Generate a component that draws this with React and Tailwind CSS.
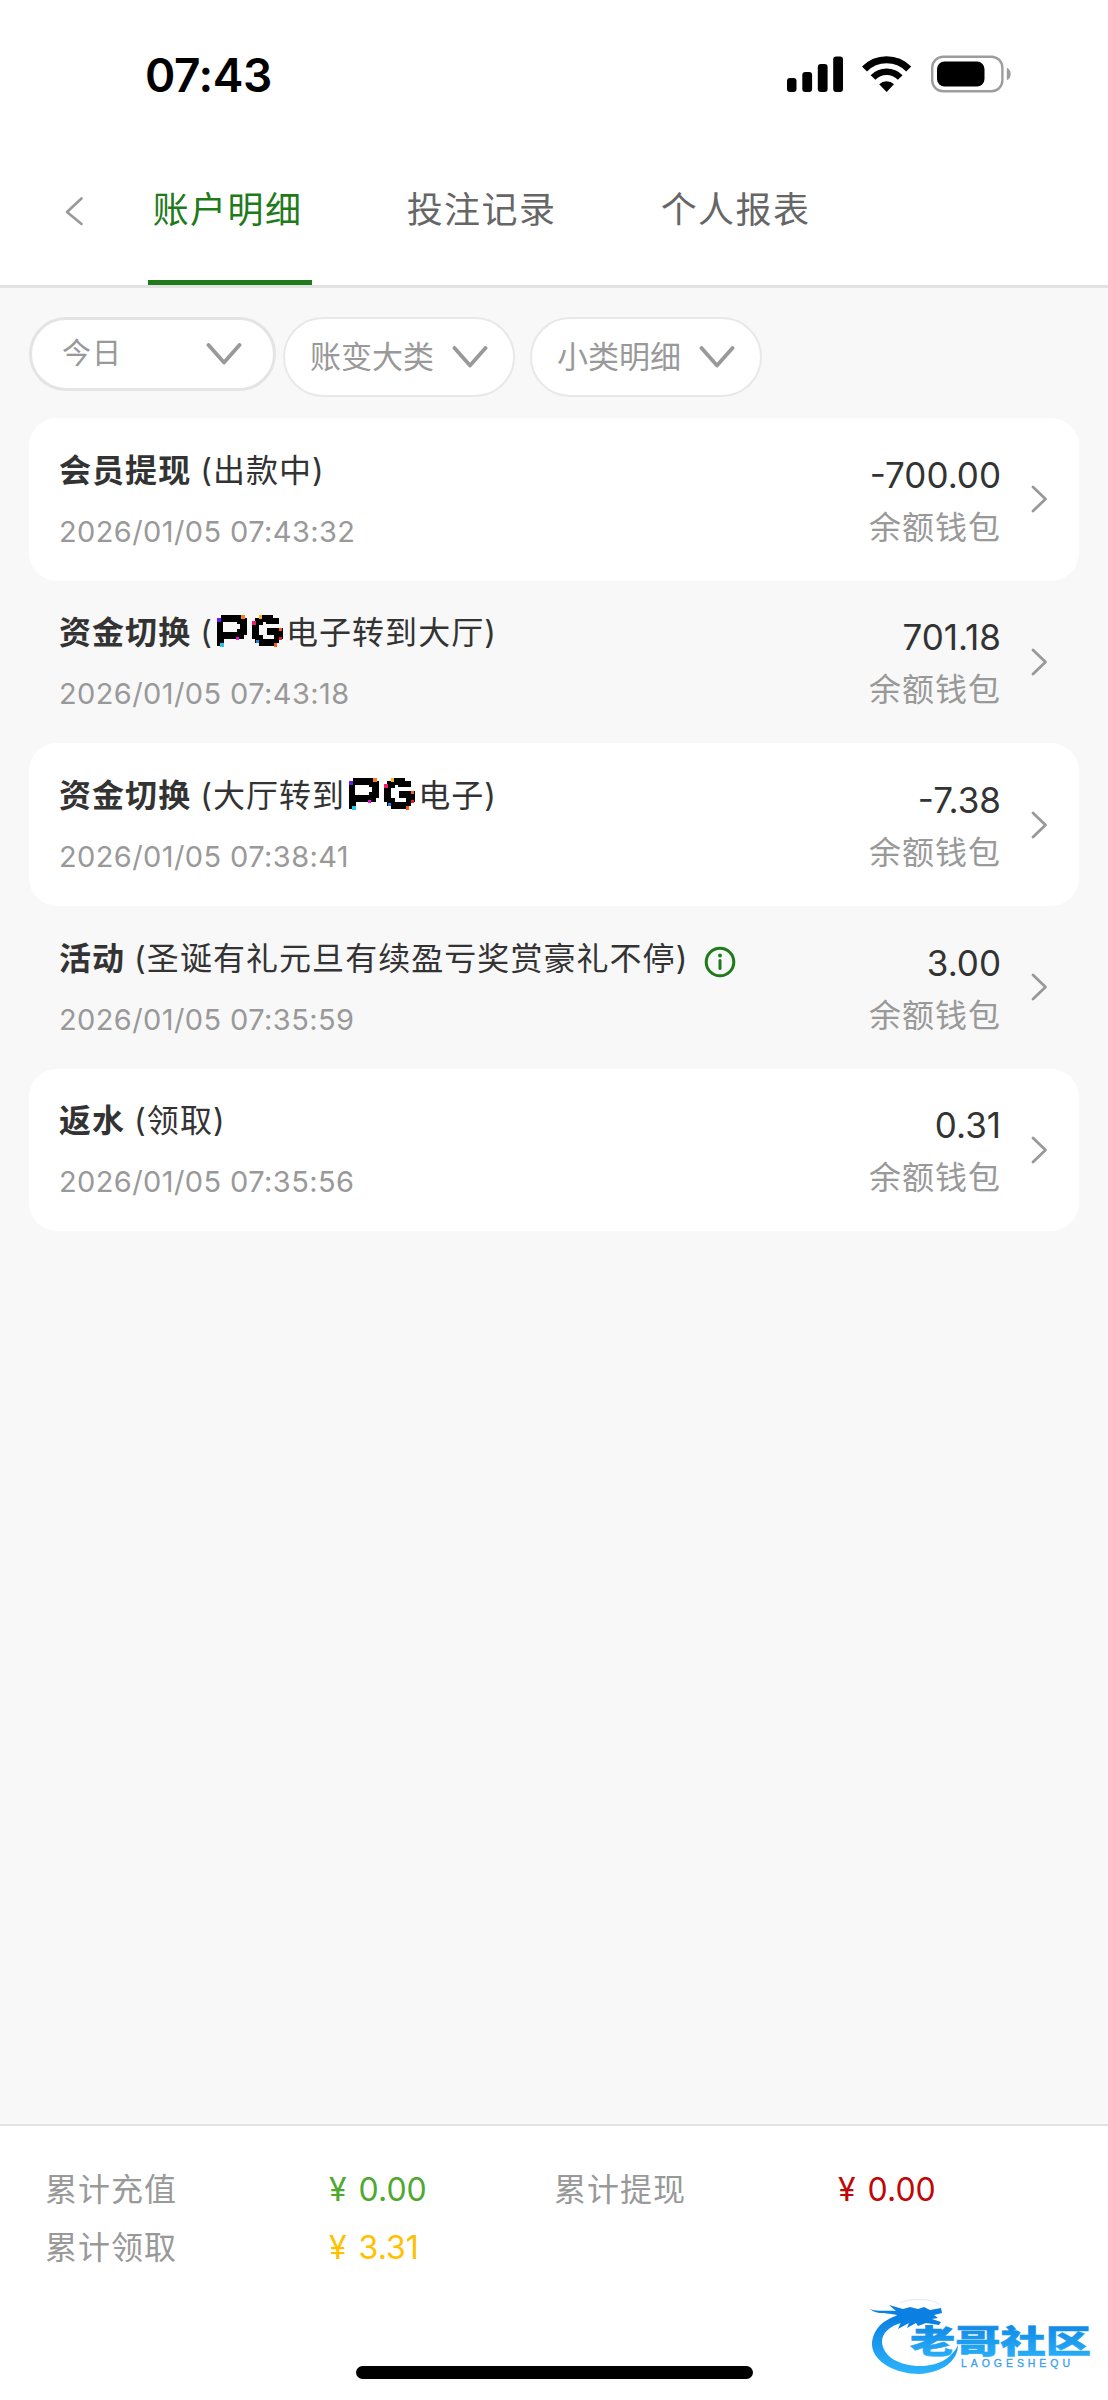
import { useState } from "react";

const tabs = ["账户明细", "投注记录", "个人报表"];

const records = [
  { title: "会员提现", note: ["出款中"], time: "2026/01/05 07:43:32", amount: "-700.00" },
  { title: "资金切换", note: ["PG", "电子转到大厅"], time: "2026/01/05 07:43:18", amount: "701.18" },
  { title: "资金切换", note: ["大厅转到", "PG", "电子"], time: "2026/01/05 07:38:41", amount: "-7.38" },
  {
    title: "活动",
    note: ["圣诞有礼元旦有续盈亏奖赏豪礼不停"],
    time: "2026/01/05 07:35:59",
    amount: "3.00",
    info: true,
  },
  { title: "返水", note: ["领取"], time: "2026/01/05 07:35:56", amount: "0.31" },
];

const totals = [
  { label: "累计充值", value: "0.00", color: "text-[#4fa830]" },
  { label: "累计提现", value: "0.00", color: "text-[#c00808]" },
  { label: "累计领取", value: "3.31", color: "text-[#ffc000]" },
];

const StatusBar = () => (
  <div className="h-[150px] pl-[145px] pr-[96px] flex items-start justify-between text-black">
    <span className="mt-[45px] text-[46px] leading-[60px] font-semibold tracking-[-0.4px]">07:43</span>
    <svg className="mt-[55px]" width="226" height="38" viewBox="0 0 226 38">
      <rect x="1" y="23" width="9.5" height="14" rx="3" />
      <rect x="16.3" y="17" width="9.8" height="20" rx="3" />
      <rect x="31.8" y="9" width="9.8" height="28" rx="3" />
      <rect x="47.2" y="1.5" width="9.8" height="35.5" rx="3" />
      <g fill="none" stroke="#000">
        <path d="M78.5 14 A31 31 0 0 1 122.7 14" strokeWidth="7" />
        <path d="M87 22.5 A19 19 0 0 1 114.2 22.5" strokeWidth="6.6" />
      </g>
      <path d="M100.6 37 L93.2 29.3 A10.6 10.6 0 0 1 108 29.3 Z" />
      <rect x="146.2" y="1.7" width="70.2" height="34.6" rx="11" fill="none" stroke="#9d9d9d" strokeWidth="2.4" />
      <rect x="151" y="6.5" width="47.5" height="25" rx="7.5" />
      <path d="M220.8 12.8 C226 14.5 226 23.5 220.8 25.2 Z" fill="#9d9d9d" />
    </svg>
  </div>
);

const Chevron = () => (
  <svg width="36" height="22" viewBox="0 0 36 22" fill="none" stroke="#999" strokeWidth="3.8" strokeLinecap="round" strokeLinejoin="round">
    <path d="M2.5 2 L18 19.5 L33.5 2" />
  </svg>
);

// Pixel style provider mark
const PgMark = () => (
  <svg className="inline-block ml-[4px] mr-[3px] mt-[-9px]" width="66" height="32" viewBox="0 0 66 32" shapeRendering="crispEdges">
    <path
      fillRule="evenodd"
      d="M4 0H27V3H30V20H27V24H7V31H0V4H4Z M6 7V17H20V14H23V9H20V7Z"
    />
    <path d="M42 0H56V3H62V9H49V7H46V10H42V20H46V24H57V20H50V13H66V24H62V28H58V31H42V28H38V24H35V7H38V3H42Z" />
    <path d="M0 3H3.5V6.5H0Z" fill="#6a1cf0" />
    <path d="M24 0H27.5V3.5H24Z" fill="#ff7a1a" />
    <path d="M18.5 21.5H22V25H18.5Z" fill="#f012e0" />
    <path d="M3 28H6.5V31.5H3Z" fill="#20c8f0" />
    <path d="M41.5 0H45V3.5H41.5Z" fill="#ffb41a" />
    <path d="M35 6H38.5V9.5H35Z" fill="#f01c70" />
    <path d="M61.5 12.5H65V16H61.5Z" fill="#ff5a14" />
    <path d="M61.5 21.5H65V25H61.5Z" fill="#f0142c" />
    <path d="M38.5 24.5H42V28H38.5Z" fill="#1c86f0" />
    <path d="M56.5 28H60V31.5H56.5Z" fill="#ff5a14" />
  </svg>
);

const InfoIcon = () => (
  <svg className="inline-block ml-[16px] mt-px" width="32" height="32" viewBox="0 0 32 32" fill="none" stroke="#1f7a1a" strokeWidth="3">
    <circle cx="16" cy="16" r="13.8" />
    <path d="M16 14.5V22.5" strokeLinecap="round" />
    <circle cx="16" cy="9.5" r="1.9" fill="#1f7a1a" stroke="none" />
  </svg>
);

const Record = ({ item, filled }) => (
  <div
    className={`h-[162.67px] rounded-[28px] pl-[30px] pr-[31px] flex items-center ${filled ? "bg-white" : ""}`}
  >
    <div className="flex-1 pt-px">
      <p className="text-[32px] leading-[46px] tracking-[1.05px] text-[#333]">
        <span className="font-bold">{item.title}</span>
        <span className="ml-[9px]">
          (
          {item.note.map((part) => (part === "PG" ? <PgMark key={part} /> : part))})
        </span>
        {item.info && <InfoIcon />}
      </p>
      <p className="mt-[18px] text-[29px] leading-[40px] tracking-[0.4px] text-[#999]">{item.time}</p>
    </div>
    <div className="text-right mr-[29px] pt-[3px]">
      <p className="text-[35px] leading-[48px] text-[#333]">{item.amount}</p>
      <p className="mt-[6px] text-[32px] leading-[46px] tracking-[1px] text-[#999]">余额钱包</p>
    </div>
    <svg width="18" height="30" viewBox="0 0 18 30" fill="none" stroke="#999" strokeWidth="2.8" strokeLinecap="round" strokeLinejoin="round">
      <path d="M3 3 L15.5 15 L3 27" />
    </svg>
  </div>
);

const CommunityLogo = () => (
  <svg className="absolute left-[860px] top-[2295px]" width="240" height="85" viewBox="0 0 240 85">
    <defs>
      <linearGradient id="ring" x1="0" y1="0" x2="0" y2="1">
        <stop offset="0" stopColor="#0a7fe0" />
        <stop offset="1" stopColor="#2cb4fb" />
      </linearGradient>
    </defs>
    <path
      fill="url(#ring)"
      d="M40 20 C22 24 12 36 12 50 C13 67 36 79 59 79 C82 78 98 66 98 50 C91 65 76 71 60 71 C40 71 23 62 22 47 C22 38 29 31 44 27 Z"
    />
    <path
      fill="#0a80e2"
      d="M10 14 C18 17 27 15 36 16 L29 10 L43 14 L50 12 L58 14 L64 12 L70 15 L81 13 L82 18 L74 20 L78 23 L72 24 L81 27 L79 30 L66 28 L58 31 L56 28 L47 33 L49 28 L38 34 L41 27 L32 26 L37 20 C26 17 16 20 10 14 Z"
    />
    <path d="M40 8 C52 2 78 4 82 12" fill="none" stroke="#dcecf8" strokeWidth="1" />
    <text
      x="50"
      y="58"
      textLength="181"
      lengthAdjust="spacingAndGlyphs"
      fontSize="32"
      fontWeight="900"
      fill="url(#ring)"
      stroke="url(#ring)"
      strokeWidth="0.6"
      fontFamily="Noto Sans CJK SC, sans-serif"
    >
      老哥社区
    </text>
    <text x="101" y="72" textLength="109" fontSize="10.5" fill="#3aa0ee" stroke="#3aa0ee" strokeWidth="0.3" fontFamily="Liberation Sans, sans-serif">
      LAOGESHEQU
    </text>
  </svg>
);

export default function App() {
  const [active, setActive] = useState(0);

  return (
    <div className="relative w-[1108px] h-[2400px] flex flex-col overflow-hidden bg-[#f8f8f8] font-['Inter','Noto_Sans_CJK_SC',sans-serif]">
      <header className="h-[288px] bg-white border-b-3 border-[#e2e2e2]">
        <StatusBar />
        <nav className="h-[135px] flex">
          <button className="w-[148px] pl-[64px] pb-[14px] flex items-center">
            <svg width="20" height="30" viewBox="0 0 20 30" fill="none" stroke="#999" strokeWidth="2.6" strokeLinecap="round" strokeLinejoin="round">
              <path d="M17.5 2.5 L3 16 L17.5 28" />
            </svg>
          </button>
          <div className="flex gap-[90px]">
            {tabs.map((tab, i) => (
              <button
                key={tab}
                onClick={() => setActive(i)}
                className={`w-[164px] pb-[10px] pr-[5px] text-[36px] tracking-[1.4px] whitespace-nowrap border-b-5 ${
                  i === active ? "text-[#1f7a1a] border-[#1f7a1a]" : "text-[#666] border-transparent"
                }`}
              >
                {tab}
              </button>
            ))}
          </div>
        </nav>
      </header>

      <main className="flex-1 px-[29px] pt-[29px]">
        <div className="h-[101px] flex items-start text-[#999]">
          <button className="w-[247px] h-[74px] pl-[30px] pr-[31px] flex items-center justify-between rounded-full border-3 border-[#e4e4e4] bg-white text-[29px] tracking-[1px]">
            今日
            <Chevron />
          </button>
          <button className="ml-[7px] w-[232px] h-[80px] px-[25px] flex items-center justify-between rounded-full border-2 border-[#e8e8e8] bg-white text-[31px] whitespace-nowrap">
            账变大类
            <Chevron />
          </button>
          <button className="ml-[15px] w-[232px] h-[80px] px-[25px] flex items-center justify-between rounded-full border-2 border-[#e8e8e8] bg-white text-[31px] whitespace-nowrap">
            小类明细
            <Chevron />
          </button>
        </div>
        {records.map((item, i) => (
          <Record key={item.time} item={item} filled={i % 2 === 0} />
        ))}
      </main>

      <footer className="h-[276px] bg-white border-t-2 border-[#e2e2e2] flex flex-col items-center">
        <div className="w-full h-[240px] pl-[45px] pt-[35px] grid grid-cols-[509px_1fr] content-start">
          {totals.map(({ label, value, color }) => (
            <div key={label} className="h-[58px] flex items-center text-[32px]">
              <span className="w-[284px] tracking-[1px] text-[#999]">{label}</span>
              <span className={`[word-spacing:3px] ${color}`}>¥ {value}</span>
            </div>
          ))}
        </div>
        <div className="w-[397px] h-[13px] rounded-full bg-black" />
      </footer>

      <CommunityLogo />
    </div>
  );
}
